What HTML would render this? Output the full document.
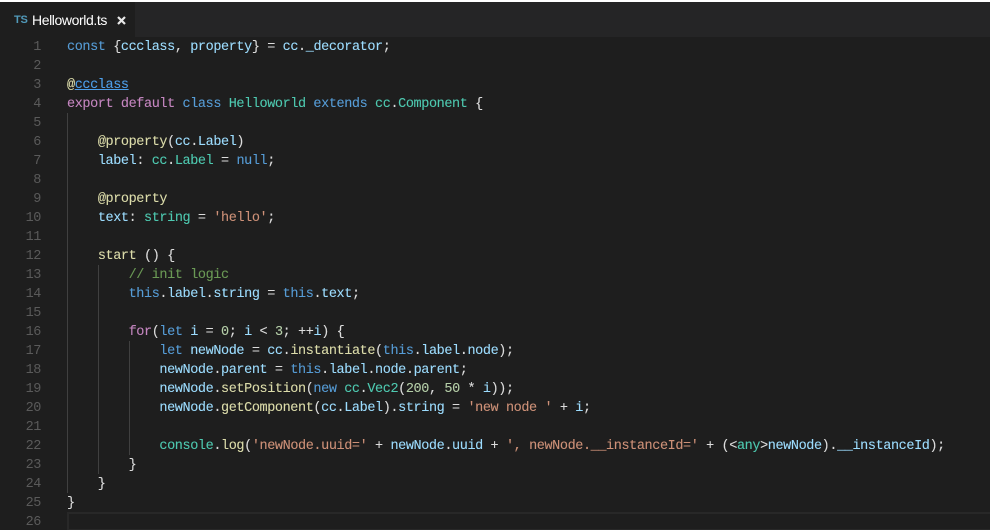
<!DOCTYPE html>
<html><head><meta charset="utf-8"><style>
html,body{margin:0;padding:0;background:#1e1e1e}
#r{position:relative;width:990px;height:530px;overflow:hidden;background:#1e1e1e}
.l{position:absolute;left:67px;height:19px;margin-top:1px;font:13.5px/19px "Liberation Mono",monospace;letter-spacing:-.402px;white-space:pre;color:#dcdcdc;-webkit-text-stroke:.1px currentColor}
.n{position:absolute;left:0;width:41px;margin-top:1px;text-align:right;font:13.5px/19px "Liberation Mono",monospace;letter-spacing:-.402px;color:#5a5a5a}
.g{position:absolute;width:1px;background:#404040}
.k{color:#569cd6}.p{color:#c586c0}.t{color:#4ec9b0}.v{color:#9cdcfe}.s{color:#ce9178}.c{color:#6a9955}.f{color:#dcdcaa}.d{color:#b5cea8}
</style></head><body><div id="r">
<div style="position:absolute;left:0;top:0;width:990px;height:2px;background:#fff"></div>
<div style="position:absolute;left:0;top:2px;width:990px;height:35px;background:#252526"></div>
<div style="position:absolute;left:0;top:2px;width:135px;height:35px;background:#1e1e1e"></div>
<div style="position:absolute;left:14px;top:14px;font:bold 11px/12px 'Liberation Sans',sans-serif;letter-spacing:-.2px;color:#519aba">TS</div>
<div style="position:absolute;left:32px;top:12px;font:14px/17px 'Liberation Sans',sans-serif;letter-spacing:-.4px;color:#fff">Helloworld.ts</div>
<svg style="position:absolute;left:116px;top:15px" width="11" height="11" viewBox="0 0 11 11"><path d="M2 2L9 9M9 2L2 9" stroke="#e8e8e8" stroke-width="2.2" fill="none"/></svg>
<div style="position:absolute;left:67px;top:512px;width:921px;height:15px;border:2px solid #282828"></div>
<div class="g" style="left:67px;top:113px;height:380px"></div>
<div class="g" style="left:98px;top:265px;height:209px"></div>
<div class="g" style="left:129px;top:341px;height:114px"></div>
<div class="n" style="top:37px">1</div><div class="n" style="top:56px">2</div><div class="n" style="top:75px">3</div><div class="n" style="top:94px">4</div><div class="n" style="top:113px">5</div><div class="n" style="top:132px">6</div><div class="n" style="top:151px">7</div><div class="n" style="top:170px">8</div><div class="n" style="top:189px">9</div><div class="n" style="top:208px">10</div><div class="n" style="top:227px">11</div><div class="n" style="top:246px">12</div><div class="n" style="top:265px">13</div><div class="n" style="top:284px">14</div><div class="n" style="top:303px">15</div><div class="n" style="top:322px">16</div><div class="n" style="top:341px">17</div><div class="n" style="top:360px">18</div><div class="n" style="top:379px">19</div><div class="n" style="top:398px">20</div><div class="n" style="top:417px">21</div><div class="n" style="top:436px">22</div><div class="n" style="top:455px">23</div><div class="n" style="top:474px">24</div><div class="n" style="top:493px">25</div><div class="n" style="top:512px">26</div>
<div class="l" style="top:37px"><span class="k">const</span> {<span class="v">ccclass</span>, <span class="v">property</span>} = <span class="v">cc</span>.<span class="v">_decorator</span>;</div>
<div class="l" style="top:75px"><span class="f">@</span><span style="color:#4d9ee8;text-decoration:underline">ccclass</span></div>
<div class="l" style="top:94px"><span class="p">export</span> <span class="p">default</span> <span class="k">class</span> <span class="t">Helloworld</span> <span class="k">extends</span> <span class="t">cc</span>.<span class="t">Component</span> {</div>
<div class="l" style="top:132px">    <span class="f">@property</span>(<span class="v">cc</span>.<span class="v">Label</span>)</div>
<div class="l" style="top:151px">    <span class="v">label</span>: <span class="t">cc</span>.<span class="t">Label</span> = <span class="k">null</span>;</div>
<div class="l" style="top:189px">    <span class="f">@property</span></div>
<div class="l" style="top:208px">    <span class="v">text</span>: <span class="t">string</span> = <span class="s">'hello'</span>;</div>
<div class="l" style="top:246px">    <span class="f">start</span> () {</div>
<div class="l" style="top:265px">        <span class="c">// init logic</span></div>
<div class="l" style="top:284px">        <span class="k">this</span>.<span class="v">label</span>.<span class="v">string</span> = <span class="k">this</span>.<span class="v">text</span>;</div>
<div class="l" style="top:322px">        <span class="p">for</span>(<span class="k">let</span> <span class="v">i</span> = <span class="d">0</span>; <span class="v">i</span> &lt; <span class="d">3</span>; ++<span class="v">i</span>) {</div>
<div class="l" style="top:341px">            <span class="k">let</span> <span class="v">newNode</span> = <span class="v">cc</span>.<span class="f">instantiate</span>(<span class="k">this</span>.<span class="v">label</span>.<span class="v">node</span>);</div>
<div class="l" style="top:360px">            <span class="v">newNode</span>.<span class="v">parent</span> = <span class="k">this</span>.<span class="v">label</span>.<span class="v">node</span>.<span class="v">parent</span>;</div>
<div class="l" style="top:379px">            <span class="v">newNode</span>.<span class="f">setPosition</span>(<span class="k">new</span> <span class="t">cc</span>.<span class="t">Vec2</span>(<span class="d">200</span>, <span class="d">50</span> * <span class="v">i</span>));</div>
<div class="l" style="top:398px">            <span class="v">newNode</span>.<span class="f">getComponent</span>(<span class="v">cc</span>.<span class="v">Label</span>).<span class="v">string</span> = <span class="s">'new node '</span> + <span class="v">i</span>;</div>
<div class="l" style="top:436px">            <span class="t">console</span>.<span class="f">log</span>(<span class="s">'newNode.uuid='</span> + <span class="v">newNode</span>.<span class="v">uuid</span> + <span class="s">', newNode.__instanceId='</span> + (&lt;<span class="t">any</span>&gt;<span class="v">newNode</span>).<span class="v">__instanceId</span>);</div>
<div class="l" style="top:455px">        }</div>
<div class="l" style="top:474px">    }</div>
<div class="l" style="top:493px">}</div>
</div></body></html>
